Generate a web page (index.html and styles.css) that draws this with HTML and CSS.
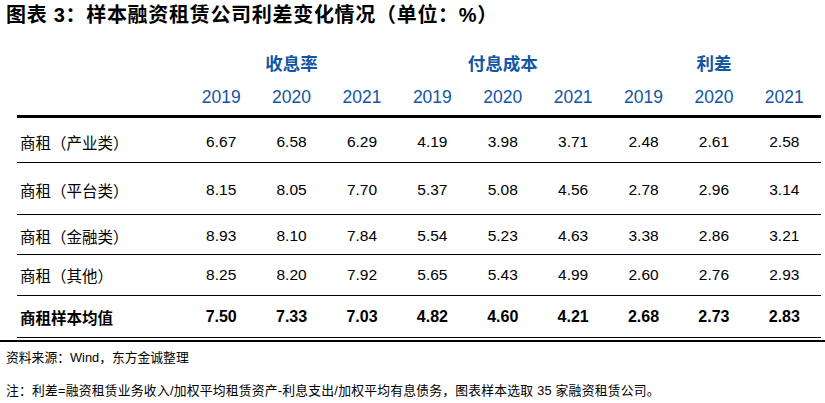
FILE: index.html
```html
<!DOCTYPE html>
<html lang="zh-CN">
<head>
<meta charset="utf-8">
<title>图表 3</title>
<link rel="stylesheet" href="styles.css">
</head>
<body>
<h1 class="title">图表 3：样本融资租赁公司利差变化情况（单位：%）</h1>
<div class="table">
  <div class="grid group-row">
    <div class="cell"></div>
    <div class="group">收息率</div>
    <div class="group">付息成本</div>
    <div class="group">利差</div>
  </div>
  <div class="grid year-row">
    <div class="cell"></div>
    <div class="cell">2019</div><div class="cell">2020</div><div class="cell">2021</div>
    <div class="cell">2019</div><div class="cell">2020</div><div class="cell">2021</div>
    <div class="cell">2019</div><div class="cell">2020</div><div class="cell">2021</div>
  </div>
  <div class="grid row r1">
    <div class="label">商租（产业类）</div>
    <div class="cell">6.67</div><div class="cell">6.58</div><div class="cell">6.29</div>
    <div class="cell">4.19</div><div class="cell">3.98</div><div class="cell">3.71</div>
    <div class="cell">2.48</div><div class="cell">2.61</div><div class="cell">2.58</div>
  </div>
  <div class="grid row r2">
    <div class="label">商租（平台类）</div>
    <div class="cell">8.15</div><div class="cell">8.05</div><div class="cell">7.70</div>
    <div class="cell">5.37</div><div class="cell">5.08</div><div class="cell">4.56</div>
    <div class="cell">2.78</div><div class="cell">2.96</div><div class="cell">3.14</div>
  </div>
  <div class="grid row r3">
    <div class="label">商租（金融类）</div>
    <div class="cell">8.93</div><div class="cell">8.10</div><div class="cell">7.84</div>
    <div class="cell">5.54</div><div class="cell">5.23</div><div class="cell">4.63</div>
    <div class="cell">3.38</div><div class="cell">2.86</div><div class="cell">3.21</div>
  </div>
  <div class="grid row r4">
    <div class="label">商租（其他）</div>
    <div class="cell">8.25</div><div class="cell">8.20</div><div class="cell">7.92</div>
    <div class="cell">5.65</div><div class="cell">5.43</div><div class="cell">4.99</div>
    <div class="cell">2.60</div><div class="cell">2.76</div><div class="cell">2.93</div>
  </div>
  <div class="grid row r5 total">
    <div class="label">商租样本均值</div>
    <div class="cell">7.50</div><div class="cell">7.33</div><div class="cell">7.03</div>
    <div class="cell">4.82</div><div class="cell">4.60</div><div class="cell">4.21</div>
    <div class="cell">2.68</div><div class="cell">2.73</div><div class="cell">2.83</div>
  </div>
</div>
<div class="bottom-rule"></div>
<p class="note source">资料来源：Wind，东方金诚整理</p>
<p class="note remark">注：利差=融资租赁业务收入/加权平均租赁资产-利息支出/加权平均有息债务，图表样本选取 35 家融资租赁公司。</p>
</body>
</html>
```
FILE: styles.css
```css
html, body {
  margin: 0;
  padding: 0;
  background: #ffffff;
}
body {
  width: 825px;
  height: 403px;
  overflow: hidden;
  font-family: "Liberation Sans", "Noto Sans CJK SC", sans-serif;
  color: #000;
}
.title {
  margin: 0;
  padding-left: 6px;
  height: 31px;
  line-height: 31px;
  font-size: 20px;
  font-weight: 700;
  letter-spacing: 0.7px;
  white-space: nowrap;
}
.table {
  margin-top: 9px;
  margin-left: 17px;
  width: 804px;
}
.grid {
  display: grid;
  grid-template-columns: 169px repeat(9, 70.4px);
  align-items: center;
}
.group-row {
  height: 47px;
  grid-template-columns: 169px repeat(3, 211.2px);
}
.group {
  text-align: center;
  color: #1256a4;
  font-size: 17.5px;
  font-weight: 700;
  line-height: 22px;
}
.year-row {
  height: 20px;
  padding-bottom: 8px;
  border-bottom: 3px solid #000;
  color: #1256a4;
  font-size: 17.5px;
  line-height: 20px;
}
.cell {
  text-align: center;
  white-space: nowrap;
}
.row {
  border-bottom: 1px solid #000;
  font-size: 15.5px;
}
.label {
  padding-left: 3px;
  font-size: 15.5px;
  white-space: nowrap;
}
.r1 { height: 44px; }
.r1 .cell, .r1 .label { padding-top: 4px; }
.r2 { height: 51px; }
.r2 .cell, .r2 .label { padding-top: 3px; }
.r3 { height: 39px; }
.r3 .cell, .r3 .label { padding-top: 3px; }
.r4 { height: 40px; }
.r5 { height: 41px; }
.total {
  font-weight: 700;
  font-size: 16px;
}
.total .label {
  font-size: 15.5px;
}
.bottom-rule {
  margin-top: 2px;
  height: 2px;
  width: 825px;
  background: #000;
}
.note {
  margin: 0;
  padding-left: 6px;
  font-size: 12.8px;
  line-height: 20px;
  white-space: nowrap;
}
.source {
  margin-top: 6px;
}
.remark {
  margin-top: 13px;
  letter-spacing: 0.22px;
}
```
